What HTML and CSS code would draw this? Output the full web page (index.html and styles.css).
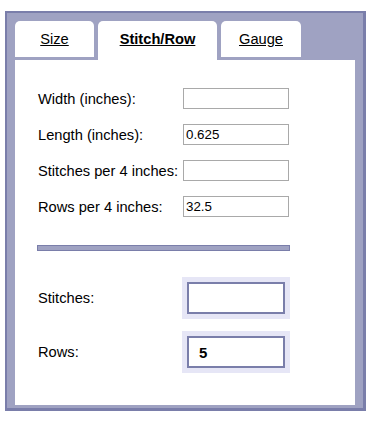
FILE: index.html
```html
<!DOCTYPE html>
<html>
<head>
<meta charset="utf-8">
<link rel="stylesheet" href="styles.css">
</head>
<body>
<div class="widget">
  <div class="tabs">
    <a class="tab tab-size" href="#">Size</a>
    <a class="tab tab-stitch active" href="#">Stitch/Row</a>
    <a class="tab tab-gauge" href="#">Gauge</a>
  </div>
  <div class="panel">
    <div class="row"><label class="lbl">Width (inches):</label><input class="field" type="text" value=""></div>
    <div class="row"><label class="lbl">Length (inches):</label><input class="field" type="text" value="0.625"></div>
    <div class="row"><label class="lbl">Stitches per 4 inches:</label><input class="field" type="text" value=""></div>
    <div class="row"><label class="lbl">Rows per 4 inches:</label><input class="field" type="text" value="32.5"></div>
    <div class="sep"></div>
    <div class="result"><span class="lbl">Stitches:</span><div class="outbox"><div class="out"></div></div></div>
    <div class="result"><span class="lbl">Rows:</span><div class="outbox"><div class="out">5</div></div></div>
  </div>
</div>
</body>
</html>
```

FILE: styles.css
```css
html, body {
  margin: 0;
  padding: 0;
  background: #ffffff;
}
body {
  font-family: "Liberation Sans", Arial, sans-serif;
  font-size: 14.67px;
  color: #000;
}
.widget {
  margin: 11px 0 0 5px;
  width: 361px;
  box-sizing: border-box;
  background: #9fa2c2;
  border-style: solid;
  border-color: #7a7eaa;
  border-width: 2px 3px 3px 2px;
  padding: 8px 8px 3px 8px;
}
.tabs {
  display: flex;
  gap: 4px;
  align-items: flex-start;
  height: 39px;
}
.tab {
  display: flex;
  align-items: center;
  justify-content: center;
  background: #fff;
  color: #000;
  text-decoration: underline;
  height: 36px;
  border-radius: 5px 5px 0 0;
  padding-top: 0;
  box-sizing: border-box;
}
.tab-size { width: 79px; }
.tab-stitch { width: 119px; }
.tab-gauge { width: 80px; }
.tab.active {
  height: 39px;
  font-weight: bold;
  padding-bottom: 3px;
}
.panel {
  background: #fff;
  height: 345px;
  box-sizing: border-box;
  padding: 28px 0 0 22px;
}
.row {
  display: flex;
  align-items: center;
  height: 21px;
  margin-bottom: 15px;
}
.row:last-of-type { margin-bottom: 0; }
.lbl {
  width: 146px;
  padding-left: 1px;
  box-sizing: border-box;
  flex: none;
}
.field {
  width: 106px;
  height: 21px;
  box-sizing: border-box;
  border: 1px solid #a9a9a9;
  padding: 0 2px;
  margin: 0;
  font-family: "Liberation Sans", Arial, sans-serif;
  font-size: 13.33px;
  color: #000;
  background: #fff;
  outline: none;
}
.sep {
  width: 253px;
  height: 6px;
  box-sizing: border-box;
  margin-top: 13px;
  border: 1px solid #7a7eaa;
  background: #9fa2c2;
}
.row + .row + .row + .row { margin-bottom: 28px; }
.result {
  display: flex;
  align-items: center;
  margin-top: 26px;
}
.result + .result { margin-top: 12px; }
.result .lbl { width: 145px; }
.outbox {
  width: 108px;
  height: 42px;
  box-sizing: border-box;
  padding: 5px;
  background: #e6e6f6;
}
.out {
  height: 32px;
  box-sizing: border-box;
  border: 2px solid #7a7eaa;
  background: #fff;
  padding-left: 10px;
  display: flex;
  align-items: center;
  font-weight: bold;
  font-size: 15px;
}
```
